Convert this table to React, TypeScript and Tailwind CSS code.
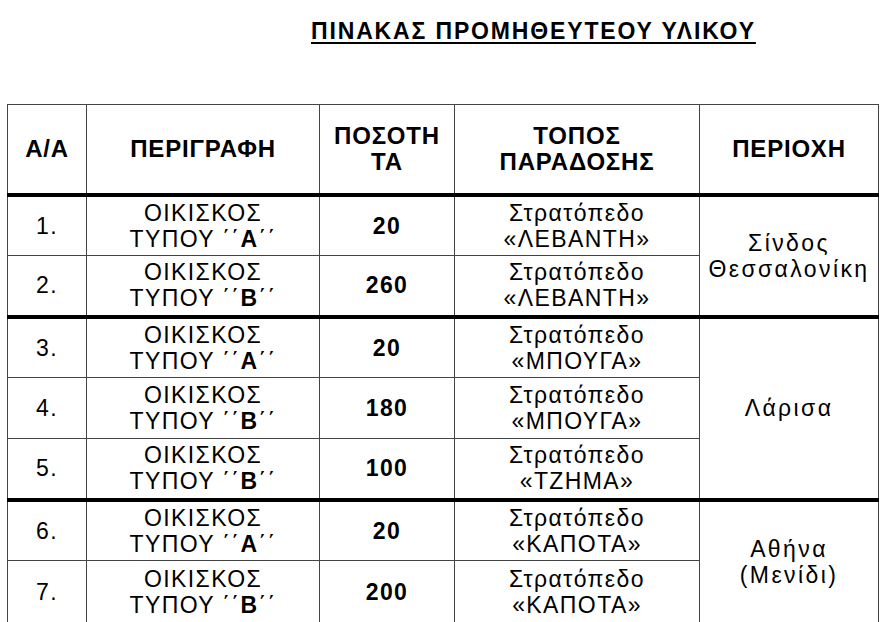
const font = { fontFamily: '"Liberation Sans", Arial, sans-serif' };

type Row = {
  n: string;
  type: string;
  qty: string;
  camp: string;
  last?: boolean;
  region?: { lines: string[]; span: number };
};

const rows: Row[] = [
  { n: '1.', type: 'Α', qty: '20', camp: '«ΛΕΒΑΝΤΗ»', region: { lines: ['Σίνδος', 'Θεσσαλονίκη'], span: 2 } },
  { n: '2.', type: 'Β', qty: '260', camp: '«ΛΕΒΑΝΤΗ»', last: true },
  { n: '3.', type: 'Α', qty: '20', camp: '«ΜΠΟΥΓΑ»', region: { lines: ['Λάρισα'], span: 3 } },
  { n: '4.', type: 'Β', qty: '180', camp: '«ΜΠΟΥΓΑ»' },
  { n: '5.', type: 'Β', qty: '100', camp: '«ΤΖΗΜΑ»', last: true },
  { n: '6.', type: 'Α', qty: '20', camp: '«ΚΑΠΟΤΑ»', region: { lines: ['Αθήνα', '(Μενίδι)'], span: 2 } },
  { n: '7.', type: 'Β', qty: '200', camp: '«ΚΑΠΟΤΑ»', last: true },
];

function Cell({
  children,
  last,
  bold,
  rowSpan,
  wide,
  tall,
}: {
  children: React.ReactNode;
  last?: boolean;
  bold?: boolean;
  rowSpan?: number;
  wide?: boolean;
  tall?: boolean;
}) {
  return (
    <td
      rowSpan={rowSpan}
      className={`border border-[#444] p-0 ${tall ? 'h-[64px]' : 'h-[61px]'} text-center align-middle leading-[26px] ${
        wide ? 'tracking-[2.4px]' : 'tracking-[1.4px]'
      } ${last ? 'border-b-4 border-b-black' : ''} ${bold ? 'font-bold' : ''}`}
    >
      {children}
    </td>
  );
}

export default function App() {
  return (
    <div className="bg-white w-[880px] h-[622px] overflow-hidden text-black" style={font}>
      <div className="pt-[17px] pl-[311px]">
        <h1 className="text-[23px] leading-[28px] font-bold underline decoration-2 underline-offset-[3px] tracking-[1.85px]">
          ΠΙΝΑΚΑΣ ΠΡΟΜΗΘΕΥΤΕΟΥ ΥΛΙΚΟΥ
        </h1>
      </div>
      <table className="mt-[59px] ml-[7px] w-[871px] table-fixed border-collapse text-[23px]">
        <colgroup>
          <col className="w-[79px]" />
          <col className="w-[233px]" />
          <col className="w-[135px]" />
          <col className="w-[245px]" />
          <col className="w-[179px]" />
        </colgroup>
        <thead>
          <tr className="text-[24px] leading-[26px] tracking-[0.8px]">
            <th className="border border-[#444] border-b-4 border-b-black h-[90px] font-bold">Α/Α</th>
            <th className="border border-[#444] border-b-4 border-b-black font-bold">ΠΕΡΙΓΡΑΦΗ</th>
            <th className="border border-[#444] border-b-4 border-b-black font-bold">
              ΠΟΣΟΤΗ
              <br />
              ΤΑ
            </th>
            <th className="border border-[#444] border-b-4 border-b-black font-bold">
              ΤΟΠΟΣ
              <br />
              ΠΑΡΑΔΟΣΗΣ
            </th>
            <th className="border border-[#444] border-b-4 border-b-black font-bold">ΠΕΡΙΟΧΗ</th>
          </tr>
        </thead>
        <tbody>
          {rows.map((r, i) => {
            const tall = i === rows.length - 1;
            return (
              <tr key={r.n}>
                <Cell last={r.last} tall={tall}>
                  {r.n}
                </Cell>
                <Cell last={r.last} tall={tall}>
                  ΟΙΚΙΣΚΟΣ
                  <br />
                  ΤΥΠΟΥ ΄΄<span className="font-bold">{r.type}</span>΄΄
                </Cell>
                <Cell last={r.last} tall={tall} bold>
                  {r.qty}
                </Cell>
                <Cell last={r.last} tall={tall}>
                  Στρατόπεδο
                  <br />
                  {r.camp}
                </Cell>
                {r.region && (
                  <Cell rowSpan={r.region.span} last wide>
                    {r.region.lines.map((l, j) => (
                      <div key={j}>{l}</div>
                    ))}
                  </Cell>
                )}
              </tr>
            );
          })}
        </tbody>
      </table>
    </div>
  );
}
